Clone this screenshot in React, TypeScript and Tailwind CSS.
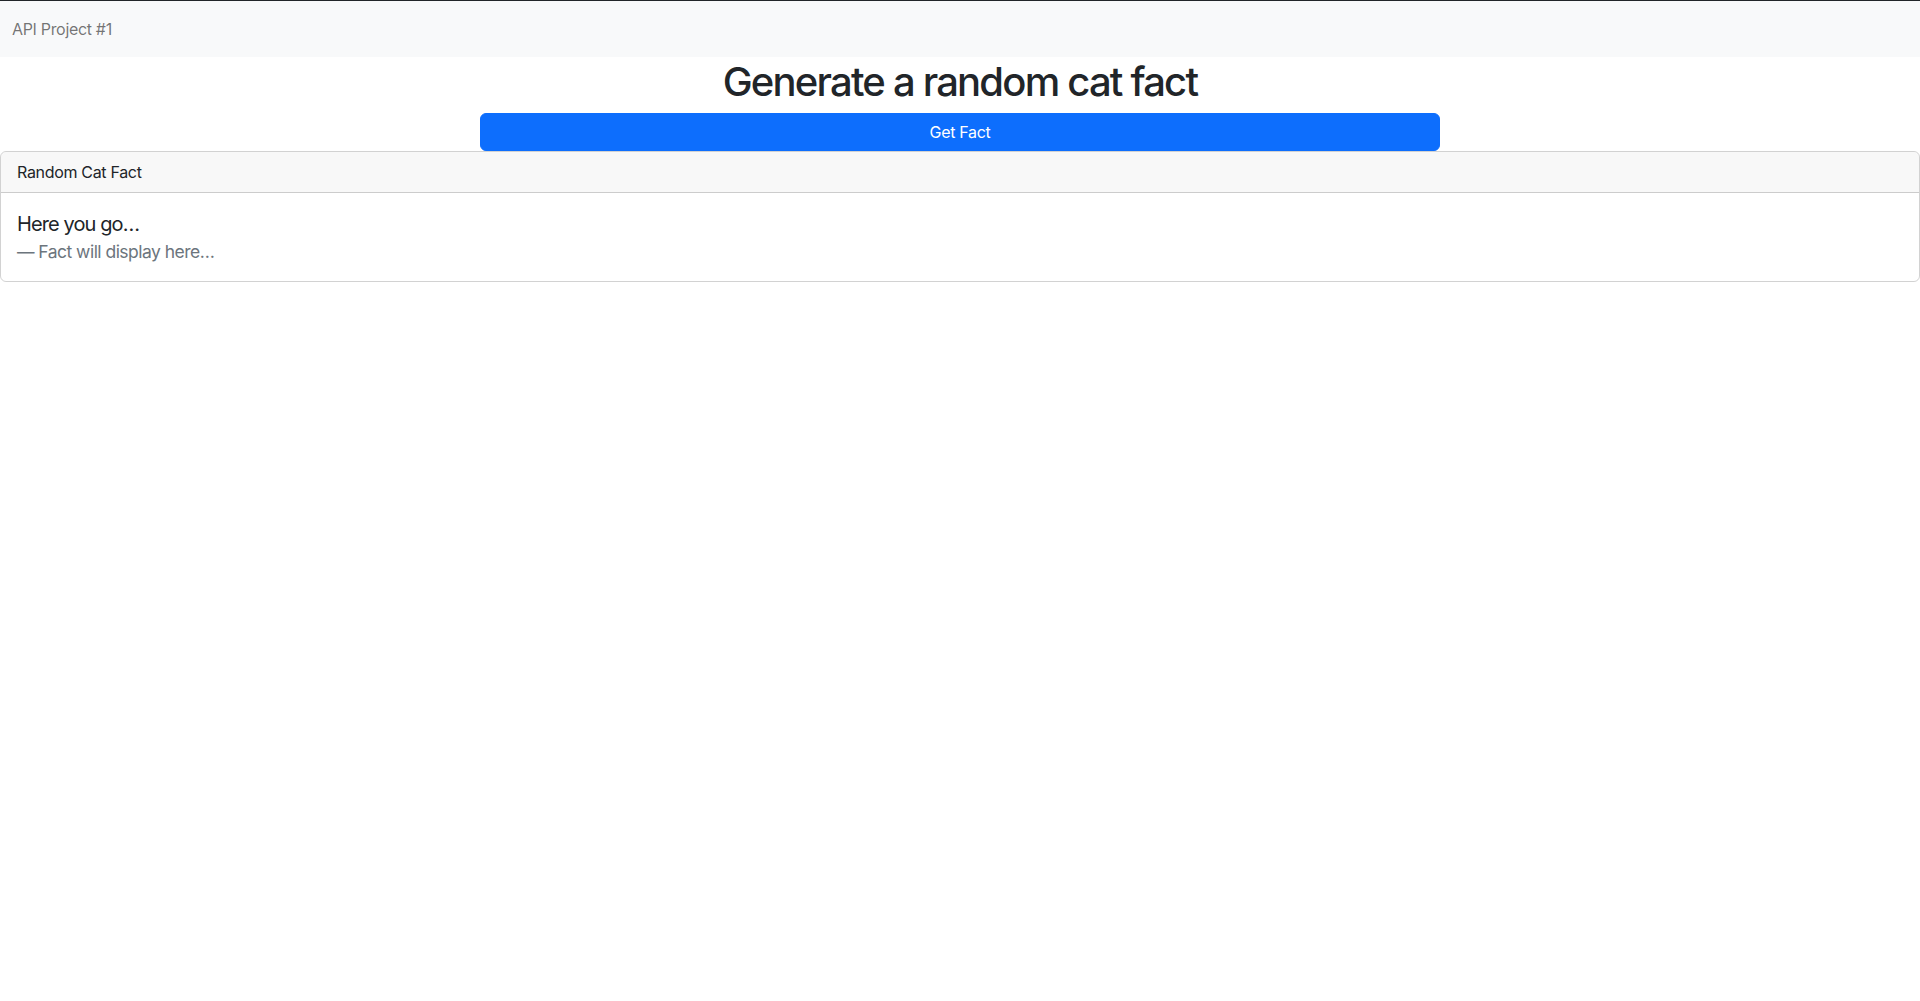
export default function App() {
  return (
    <div className="min-h-[1001px] bg-white font-['Inter','Liberation_Sans',sans-serif] text-[#212529]">
      <nav className="flex h-[57px] items-center border-t border-[#212529] bg-[#f8f9fa] px-3">
        <span className="text-base leading-6 tracking-[-0.02em] text-black/55">API Project #1</span>
      </nav>

      <h1 className="mb-[7px] pt-px text-center text-[40px] font-medium leading-[48px] tracking-[-0.045em] text-[#212529]">
        Generate a random cat fact
      </h1>

      <div className="flex justify-center">
        <button className="h-[38px] w-1/2 rounded-md border border-[#0d6efd] bg-[#0d6efd] px-3 text-base leading-6 tracking-[-0.02em] text-white">
          Get Fact
        </button>
      </div>

      <div className="rounded-md border border-black/[0.175]">
        <div className="rounded-t-md border-b border-black/[0.175] bg-[#212529]/[0.03] px-4 py-2 text-base leading-6 tracking-[-0.02em]">
          Random Cat Fact
        </div>
        <div className="p-4">
          <blockquote className="text-xl">
            <p className="leading-[30px] tracking-[-0.045em]">Here you go…</p>
            <footer className="text-[17.5px] leading-[26px] tracking-[-0.03em] text-[#6c757d]">— Fact will display here…</footer>
          </blockquote>
        </div>
      </div>
    </div>
  );
}
